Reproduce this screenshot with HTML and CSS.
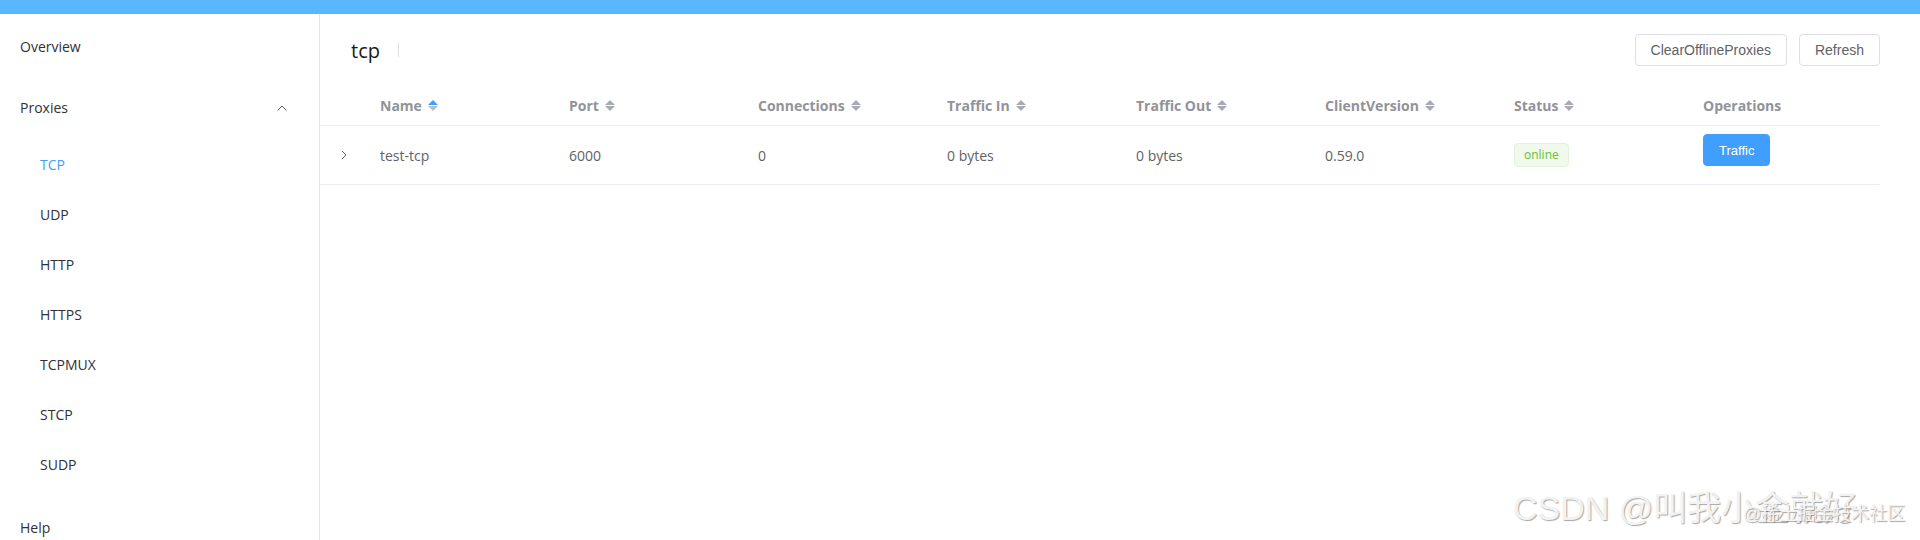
FILE: index.html
```html
<!DOCTYPE html>
<html>
  <head>
    <title>frp dashboard - tcp</title>
    <link rel="stylesheet" href="styles.css">
  </head>
  <body>
    <div class="topbar"></div>

    <div class="layout">
      <aside class="sidebar">
        <ul class="menu">
          <li class="menu-item">Overview</li>
          <li class="menu-item submenu-title">
            <span>Proxies</span>
            <svg class="chevron-up" width="10" height="6" viewBox="0 0 10 6" fill="none" stroke="#606266" stroke-width="1">
              <polyline points="0.5 5.5 5 1 9.5 5.5" />
            </svg>
          </li>
          <li>
            <ul class="submenu">
              <li class="active">TCP</li>
              <li>UDP</li>
              <li>HTTP</li>
              <li>HTTPS</li>
              <li>TCPMUX</li>
              <li>STCP</li>
              <li>SUDP</li>
            </ul>
          </li>
          <li class="menu-item help">Help</li>
        </ul>
      </aside>

      <main class="content">
        <div class="toolbar">
          <span class="page-title">tcp</span>
          <span class="title-divider"></span>
          <div class="toolbar-actions">
            <button class="btn">ClearOfflineProxies</button>
            <button class="btn">Refresh</button>
          </div>
        </div>

        <div class="table">
          <div class="table-row table-head">
            <div class="cell"></div>
            <div class="cell">Name <span class="sort asc"><i class="up"></i><i class="down"></i></span></div>
            <div class="cell">Port <span class="sort"><i class="up"></i><i class="down"></i></span></div>
            <div class="cell">Connections <span class="sort"><i class="up"></i><i class="down"></i></span></div>
            <div class="cell">Traffic In <span class="sort"><i class="up"></i><i class="down"></i></span></div>
            <div class="cell">Traffic Out <span class="sort"><i class="up"></i><i class="down"></i></span></div>
            <div class="cell">ClientVersion <span class="sort"><i class="up"></i><i class="down"></i></span></div>
            <div class="cell">Status <span class="sort"><i class="up"></i><i class="down"></i></span></div>
            <div class="cell">Operations</div>
          </div>

          <div class="table-row table-body-row">
            <div class="cell expand">
              <svg width="6" height="10" viewBox="0 0 6 10" fill="none" stroke="#606266" stroke-width="1">
                <polyline points="1 1 5 5 1 9" />
              </svg>
            </div>
            <div class="cell">test-tcp</div>
            <div class="cell">6000</div>
            <div class="cell">0</div>
            <div class="cell">0 bytes</div>
            <div class="cell">0 bytes</div>
            <div class="cell">0.59.0</div>
            <div class="cell"><span class="tag">online</span></div>
            <div class="cell ops"><button class="btn btn-primary">Traffic</button></div>
          </div>
        </div>
      </main>
    </div>

    <span class="wm-main">CSDN @叫我小金就好</span>
    <span class="wm-sub">@稀土掘金技术社区</span>
  </body>
</html>
```

FILE: styles.css
```css
* {
  box-sizing: border-box;
}

body {
  margin: 0;
  height: 540px;
  overflow: hidden;
  font-family: "Open Sans", "Noto Sans", sans-serif;
  font-size: 14px;
  color: #303133;
  background: #fff;
}

.topbar {
  height: 14px;
  background: #58b7ff;
}

.layout {
  display: flex;
  height: 526px;
}

/* Sidebar menu */
.sidebar {
  width: 320px;
  flex-shrink: 0;
  border-right: 1px solid #e6e6e6;
}

.menu,
.submenu {
  list-style: none;
  margin: 0;
  padding: 0;
}

.menu {
  padding-top: 5px;
}

.menu-item {
  height: 56px;
  line-height: 56px;
  padding-left: 20px;
}

.submenu-title {
  display: flex;
  align-items: center;
  justify-content: space-between;
  padding-right: 32px;
  margin-top: 5px;
}

.submenu {
  padding-top: 4px;
}

.submenu li {
  height: 50px;
  line-height: 50px;
  padding-left: 40px;
}

.submenu li.active {
  color: #409eff;
}

.menu-item.help {
  margin-top: 10px;
}

/* Main content */
.content {
  flex: 1;
  min-width: 0;
  padding-right: 40px;
}

.toolbar {
  display: flex;
  align-items: center;
  height: 52px;
  padding: 20px 0 0 31px;
  margin-bottom: 20px;
}

.page-title {
  font-size: 20px;
  color: #1a1a1a;
  line-height: 32px;
  padding-top: 2px;
}

.title-divider {
  width: 1px;
  height: 14px;
  background: #dcdfe6;
  margin-left: 18px;
}

.toolbar-actions {
  margin-left: auto;
  display: flex;
  gap: 12px;
}

.btn {
  height: 32px;
  padding: 0 15px;
  border: 1px solid #dcdfe6;
  border-radius: 4px;
  background: #fff;
  color: #606266;
  font-family: "Liberation Sans", Arial, sans-serif;
  font-size: 14px;
  cursor: pointer;
}

.btn-primary {
  background: #409eff;
  border-color: #409eff;
  color: #fff;
  font-size: 13px;
}

/* Table */
.table-row {
  display: grid;
  grid-template-columns: 48px repeat(8, 189px);
  border-bottom: 1px solid #ebeef5;
}

.table-head {
  height: 40px;
  align-items: center;
  color: #909399;
  font-weight: 700;
}

.table-body-row {
  height: 59px;
  align-items: center;
  color: #606266;
}

.cell {
  display: flex;
  align-items: center;
  padding: 0 12px;
  white-space: nowrap;
}

.cell.expand {
  justify-content: center;
  padding: 0;
}

.cell.ops {
  align-self: start;
  padding-top: 8px;
}

.sort {
  display: inline-flex;
  flex-direction: column;
  gap: 1px;
  margin-left: 6px;
}

.sort i {
  width: 0;
  height: 0;
  border-left: 5px solid transparent;
  border-right: 5px solid transparent;
}

.sort .up {
  border-bottom: 5px solid #a8abb2;
}

.sort .down {
  border-top: 5px solid #a8abb2;
}

.sort.asc .up {
  border-bottom-color: #409eff;
}

.sort.asc .down {
  border-top-color: #b4bfcc;
}

.tag {
  height: 24px;
  line-height: 22px;
  padding: 0 9px;
  border: 1px solid #e1f3d8;
  border-radius: 4px;
  background: #f0f9eb;
  color: #67c23a;
  font-size: 12px;
  font-weight: 400;
}

/* Watermark overlay */
.wm-main,
.wm-sub {
  position: absolute;
  white-space: nowrap;
  line-height: 1;
  color: #f2f2f2;
  text-shadow: 1px 1px 1px rgba(0, 0, 0, 0.35), -1px -1px 0 rgba(255, 255, 255, 0.6);
  font-family: "Liberation Sans", "Noto Sans CJK SC", sans-serif;
  pointer-events: none;
}

.wm-main {
  left: 1513px;
  top: 491px;
  font-size: 34px;
}

.wm-sub {
  left: 1743px;
  top: 505px;
  font-size: 18px;
}
```
